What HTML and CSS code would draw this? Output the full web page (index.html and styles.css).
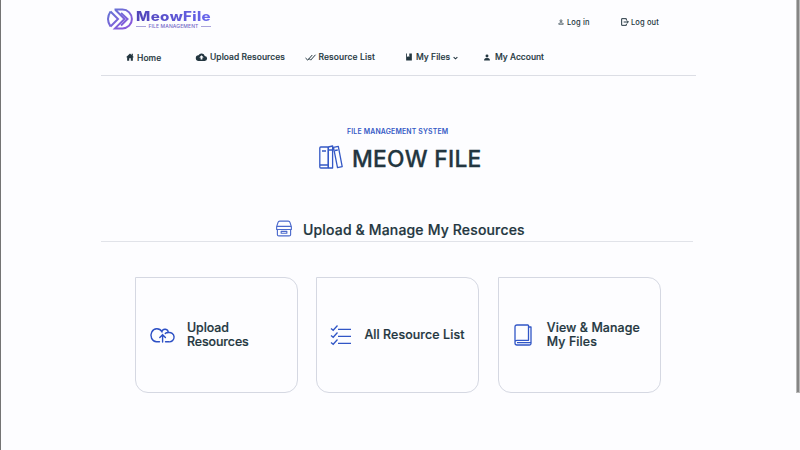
FILE: index.html
```html
<!DOCTYPE html>
<html lang="en">
<head>
<meta charset="utf-8">
<title>MeowFile</title>
<link rel="stylesheet" href="styles.css">
</head>
<body>
<div class="page">
  <header class="header">
    <div class="topbar">
      <div class="logo">
        <svg class="logo-mark" viewBox="0 0 27 22" fill="none" stroke="url(#g)" stroke-width="2">
          <defs><linearGradient id="g" gradientUnits="userSpaceOnUse" x1="4" y1="0" x2="20" y2="22"><stop offset="0" stop-color="#6375d4"/><stop offset="1" stop-color="#8d55dc"/></linearGradient></defs>
          <path d="M7.500 1.600H15.500A9.400 9.400 0 0 1 15.500 20.400H8L17.500 11L8.500 2"/>
          <path d="M3.500 3.500L11 11L3.500 18.500M3.500 3.500Q-1.500 11 3.500 18.500M14 5L20.500 11L14 17.500"/>
        </svg>
        <div class="logo-copy">
          <div class="logo-name">MeowFile</div>
          <div class="logo-tag"><i></i><span>FILE MANAGEMENT</span><i></i></div>
        </div>
      </div>
      <div class="session">
        <a class="link login"><svg viewBox="0 0 12 12" fill="none" stroke="currentColor" stroke-width="1.400"><circle cx="6" cy="3.600" r="2"/><path d="M1.500 10.500V9.500Q2 7.500 6 7.500T10.500 9.500V10.500Z"/></svg><span>Log in</span></a>
        <a class="link logout"><svg viewBox="0 0 12 12" fill="none" stroke="currentColor" stroke-width="1.500"><path d="M8 3V1H1V11H8V9M4 6H11M8.500 3.500L11 6L8.500 8.500"/></svg><span>Log out</span></a>
      </div>
    </div>
    <nav class="nav">
      <a class="link home"><svg viewBox="0 0 12 12" fill="currentColor"><path d="M6 .8L12 6.300H10.300V11.500H7.200V7.800H4.800V11.500H1.700V6.300H0L6 .8ZM8.500 1H10.300V4H8.500Z"/></svg><span>Home</span></a>
      <a class="link upload"><svg viewBox="0 0 24 18" fill="currentColor" fill-rule="evenodd"><path d="M19.300 7A7.500 7.500 0 0 0 5.300 5A6.500 6.500 0 0 0 6 18H19A5.500 5.500 0 0 0 19.300 7ZM14 10V14.500H10V10H7L12 5L17 10Z"/></svg><span>Upload Resources</span></a>
      <a class="link list"><svg viewBox="0 0 22 14" fill="none" stroke="currentColor" stroke-width="2"><path d="M1 8L5.500 12.300L14.500 2M8 9L11.300 12.300L21 1.500"/></svg><span>Resource List</span></a>
      <a class="link files"><svg viewBox="0 0 12 14" fill="currentColor"><path d="M1 1H2.500V7L4.500 5.700L6.500 7V1H11V13H1Z"/></svg><span>My Files</span><svg class="chevron" viewBox="0 0 8 6" fill="none" stroke="currentColor" stroke-width="1.800"><path d="M1 1.500L4 4.300L7 1.500"/></svg></a>
      <a class="link account"><svg viewBox="0 0 12 12" fill="currentColor"><circle cx="6" cy="3.300" r="2.500"/><path d="M1 11V9.300Q2 7 6 7T11 9.300V11Z"/></svg><span>My Account</span></a>
    </nav>
  </header>
  <main>
    <section class="hero">
      <p class="eyebrow">FILE MANAGEMENT SYSTEM</p>
      <h1><svg viewBox="0 0 24 24" fill="none" stroke="#3458c5" stroke-width="1.300" stroke-linejoin="round"><rect x=".8" y="2" width="8.500" height="21" rx="1"/><path d="M3 6H7M9.300 2L13.600 1V23H9.300ZM9.300 5H13.600M14.500 2.300L19.300 1.300L23.200 21.700L18.500 22.700ZM16 5.500L18.800 5M1 20H9"/></svg><span>MEOW FILE</span></h1>
    </section>
    <section class="heading">
      <svg viewBox="0 0 18 18" fill="none" stroke="#4b69cc" stroke-width="1.200" stroke-linejoin="round"><path d="M1.200 7L2.700 2.500Q3 1.200 4.500 1.200H13.500Q15 1.200 15.300 2.500L16.800 7V10H1.200ZM1.200 6.800H16.800M2 10V15.500Q2 16.800 3.500 16.800H14.500Q16 16.800 16 15.500V10M6 12H12V14H6Z"/></svg>
      <h2>Upload &amp; Manage My Resources</h2>
    </section>
    <section class="cards">
      <a class="card c1"><svg viewBox="0 0 24 16" fill="none" stroke="#2d50c5" stroke-width="1.400" stroke-linecap="round"><path d="M9.500 14.800H6.500A6 6.500 0 1 1 11.900 4.700A3.200 3.200 0 0 1 18.200 5.600A4.700 4.700 0 1 1 18.700 14.800H15.500M12.600 15V8M9.800 10.500L12.600 7.700L15.400 10.500M15.300 6.500Q16.500 5.300 18.200 5.600"/></svg><span>Upload<br>Resources</span></a>
      <a class="card c2"><svg viewBox="0 0 22 22" fill="none" stroke="#3156c6" stroke-width="1.300"><path d="M1 4.500L3.200 6.300L7.500 1.500M8 5.300H21M1 11.500L3.200 13.300L7.500 8.500M8 12.300H21M1 18.500L3.200 20.300L7.500 15.500M8 19.300H21"/></svg><span>All Resource List</span></a>
      <a class="card c3"><svg viewBox="0 0 18 22" fill="none" stroke="#3156c6" stroke-width="1.300" stroke-linejoin="round"><path d="M14.500 1H3Q1 1 1 3V19Q1 21 3 21H15.500Q17 21 17 19.500V3H14.500M14.500 1V16.300H3Q1 16.300 1 18.500M3 18.600H17"/></svg><span>View &amp; Manage<br>My Files</span></a>
    </section>
  </main>
</div>
<div class="window-edge"></div>
<div class="scrollbar"></div>
</body>
</html>
```
FILE: styles.css
```css
* { box-sizing: border-box; }
body { margin: 0; height: 450px; overflow: hidden; background: #fdfdff; color: #233640; font-family: Inter, "Liberation Sans", sans-serif; font-weight: 500; }
svg { display: block; flex: none; overflow: visible; }
.page { width: 595px; margin-left: 101px; }
.header { height: 76px; border-bottom: 1px solid #dcdee5; }
.topbar { display: flex; height: 40px; }
.logo { display: flex; padding: 8px 0 0 6px; width: 457px; }
.logo-mark { width: 27px; height: 22px; }
.logo-copy { width: 75px; margin: 2px 0 0 2px; }
.logo-name { width: max-content; font: 800 12.500px/13px Inter, sans-serif; letter-spacing: .300px; transform: scaleX(1.210); transform-origin: left; background: linear-gradient(90deg, #5144b8, #6867ee); background-clip: text; color: transparent; white-space: nowrap; }
.logo-tag { display: flex; align-items: center; justify-content: space-between; height: 5px; margin-top: 1px; font: 500 5px/5px Inter, sans-serif; letter-spacing: .120px; color: #7468c7; white-space: nowrap; }
.logo-tag i { width: 10px; height: 1px; background: #aaa4dc; }
.session { display: flex; padding-top: 16px; font-size: 7.500px; font-weight: 450; letter-spacing: .120px; }
.link { display: flex; align-items: center; height: 12px; white-space: nowrap; flex: none; }
.login { width: 63px; }
.login svg { width: 6px; height: 6px; margin-right: 3px; }
.logout svg { width: 8px; height: 8px; margin-right: 2px; }
.nav { display: flex; padding: 11px 0 0 25px; font-size: 8.500px; font-weight: 500; letter-spacing: .050px; -webkit-text-stroke: .150px currentColor; }
.home { width: 70px; padding-top: 2px; }
.home svg { width: 8px; height: 8px; margin: -3px 3px 0 0; }
.upload { width: 109px; }
.upload svg { width: 11px; height: 8px; margin-right: 3px; }
.list { width: 100px; letter-spacing: .120px; }
.list svg { width: 11px; height: 7px; margin: 0 3px 0 -.500px; }
.files { width: 78px; }
.files svg { width: 8px; height: 8px; margin-right: 3px; }
.files .chevron { width: 5px; height: 4px; margin: 2px 0 0 3px; }
.account { letter-spacing: 0; }
.account svg { width: 8px; height: 7px; margin-right: 4px; }
.hero { height: 136px; padding-top: 49px; }
.eyebrow { margin: 0 0 0 246px; font-size: 6.900px; line-height: 13px; font-weight: 600; letter-spacing: .180px; color: #3459c5; }
h1 { display: flex; align-items: center; height: 32px; margin: 5px 0 0 218px; font-size: 22.800px; font-weight: 500; letter-spacing: .280px; line-height: 32px; -webkit-text-stroke: .300px currentColor; }
h1 span { padding-bottom: 1px; }
h1 svg { width: 24px; height: 24px; margin: -4px 9px 0 0; }
.heading { display: flex; align-items: center; width: 592px; height: 30px; padding-left: 174px; border-bottom: 1px solid #e1e3e9; }
.heading svg { width: 18px; height: 17px; margin: 3px 10px 0 0; }
h2 { margin: 7px 0 0; font-size: 14px; line-height: 20px; font-weight: 500; letter-spacing: .160px; -webkit-text-stroke: .200px currentColor; white-space: nowrap; }
.cards { display: grid; grid-template-columns: repeat(3, 163px); column-gap: 18.400px; padding: 35px 0 0 34px; }
.card { display: flex; align-items: center; height: 116px; border: 1px solid #d5d8e2; border-radius: 0 13px 13px 13px; padding-left: 14px; font-size: 12.400px; font-weight: 500; line-height: 14px; letter-spacing: .100px; -webkit-text-stroke: .200px currentColor; white-space: nowrap; }
.c1 svg { width: 24px; height: 16px; margin-right: 13px; }
.c1 { letter-spacing: -.080px; }
.c2 svg { width: 22px; height: 22px; margin: 0 12px 0 -1px; }
.c3 svg { width: 18px; height: 22px; margin: 0 15px 0 1px; }
.window-edge { position: absolute; left: 0; top: 0; width: 1px; height: 450px; background: #747474; }
.scrollbar { position: absolute; right: 0; top: 0; width: 4px; height: 393px; background: #858585; border: solid #b8b8b8; border-width: 0 1px 1px; }
```
